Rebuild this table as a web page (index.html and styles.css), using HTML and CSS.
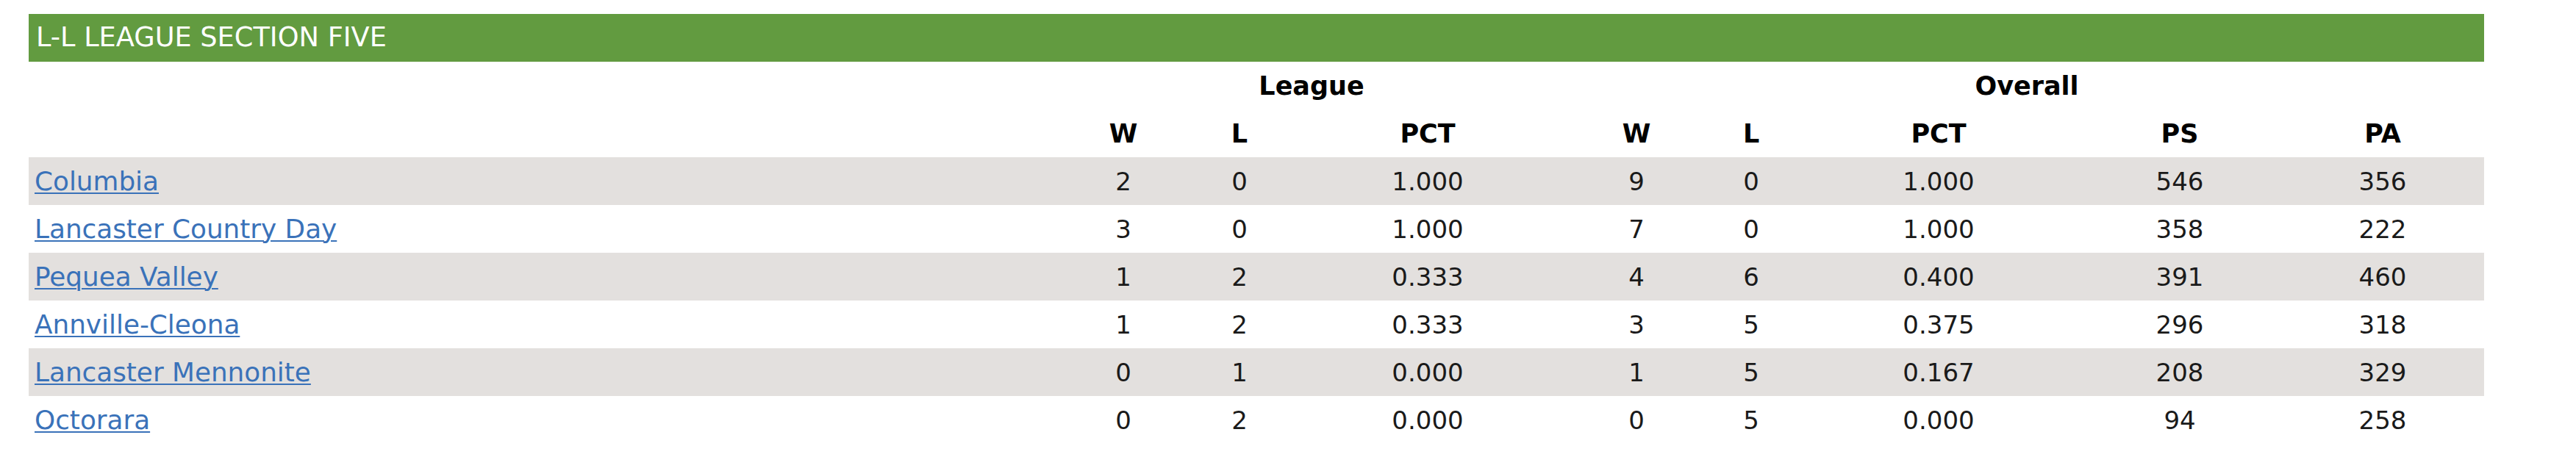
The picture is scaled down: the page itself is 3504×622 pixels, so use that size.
FILE: index.html
```html
<!DOCTYPE html>
<html lang="en">
<head>
<meta charset="utf-8">
<title>L-L League Section Five</title>
<link rel="stylesheet" href="styles.css">
</head>
<body>
<section class="standings">
  <h2 class="standings-title">L-L LEAGUE SECTION FIVE</h2>
  <table class="standings-table">
    <colgroup>
      <col class="col-team">
      <col class="col-w1">
      <col class="col-l1">
      <col class="col-pct1">
      <col class="col-w2">
      <col class="col-l2">
      <col class="col-pct2">
      <col class="col-ps">
      <col class="col-pa">
    </colgroup>
    <thead>
      <tr class="group-row">
        <th></th>
        <th colspan="3">League</th>
        <th colspan="5">Overall</th>
      </tr>
      <tr class="label-row">
        <th></th>
        <th>W</th><th>L</th><th>PCT</th>
        <th>W</th><th>L</th><th>PCT</th><th>PS</th><th>PA</th>
      </tr>
    </thead>
    <tbody>
      <tr class="alt"><td class="team"><a href="#">Columbia</a></td><td>2</td><td>0</td><td>1.000</td><td>9</td><td>0</td><td>1.000</td><td>546</td><td>356</td></tr>
      <tr><td class="team"><a href="#">Lancaster Country Day</a></td><td>3</td><td>0</td><td>1.000</td><td>7</td><td>0</td><td>1.000</td><td>358</td><td>222</td></tr>
      <tr class="alt"><td class="team"><a href="#">Pequea Valley</a></td><td>1</td><td>2</td><td>0.333</td><td>4</td><td>6</td><td>0.400</td><td>391</td><td>460</td></tr>
      <tr><td class="team"><a href="#">Annville-Cleona</a></td><td>1</td><td>2</td><td>0.333</td><td>3</td><td>5</td><td>0.375</td><td>296</td><td>318</td></tr>
      <tr class="alt"><td class="team"><a href="#">Lancaster Mennonite</a></td><td>0</td><td>1</td><td>0.000</td><td>1</td><td>5</td><td>0.167</td><td>208</td><td>329</td></tr>
      <tr><td class="team"><a href="#">Octorara</a></td><td>0</td><td>2</td><td>0.000</td><td>0</td><td>5</td><td>0.000</td><td>94</td><td>258</td></tr>
    </tbody>
  </table>
</section>
</body>
</html>
```

FILE: styles.css
```css
html, body {
  margin: 0;
  padding: 0;
  background: #ffffff;
}

body {
  font-family: "DejaVu Sans", "Liberation Sans", sans-serif;
  color: #111111;
}

.standings {
  width: 3340px;
  margin: 19px 0 0 39px;
}

.standings-title {
  margin: 0;
  height: 65px;
  line-height: 63px;
  padding: 0 10px;
  background: #629b40;
  color: #ffffff;
  font-size: 36.7px;
  font-weight: 400;
  letter-spacing: 0;
}

.standings-table {
  width: 3340px;
  border-collapse: collapse;
  table-layout: fixed;
  font-size: 35px;
}

.col-team { width: 1394px; }
.col-w1 { width: 190px; }
.col-l1 { width: 126px; }
.col-pct1 { width: 386px; }
.col-w2 { width: 182px; }
.col-l2 { width: 130px; }
.col-pct2 { width: 380px; }
.col-ps { width: 276px; }
.col-pa { width: 276px; }

.standings-table th,
.standings-table td {
  height: 65px;
  padding: 0;
  text-align: center;
  vertical-align: middle;
  white-space: nowrap;
}

.standings-table th {
  font-weight: 700;
  color: #000000;
}

.standings-table td {
  font-size: 34px;
  font-weight: 400;
  color: #1a1a1a;
}

.standings-table tr.alt td {
  background: #e3e0de;
}

.standings-table td.team {
  text-align: left;
  padding-left: 8px;
  font-size: 35.8px;
}

.team a {
  color: #3a72b9;
  text-decoration: underline;
  text-decoration-thickness: 2px;
  text-underline-offset: 3px;
}
```
